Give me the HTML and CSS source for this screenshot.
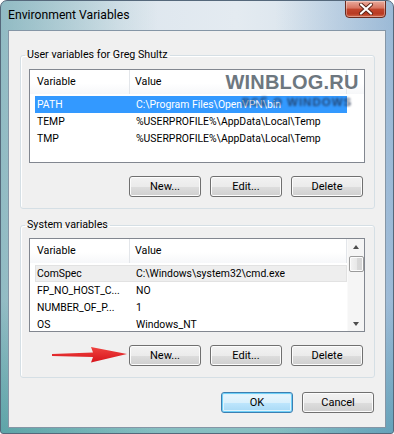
FILE: index.html
```html
<!DOCTYPE html>
<html>
<head>
<meta charset="utf-8">
<link rel="stylesheet" href="styles.css">
</head>
<body>
<div class="window">
  <div class="titlebar">
    <span class="title">Environment Variables</span>
    <div class="close">
      <svg width="16" height="12" viewBox="0 0 16 12">
        <path d="M3 1.5 L13 10.5 M13 1.5 L3 10.5" stroke="#5a2418" stroke-width="4" stroke-linecap="round"/>
        <path d="M3 1.5 L13 10.5 M13 1.5 L3 10.5" stroke="#ffffff" stroke-width="2.2" stroke-linecap="round"/>
      </svg>
    </div>
  </div>
  <div class="client">
    <fieldset class="group">
      <legend>User variables for Greg Shultz</legend>
      <div class="list first-list">
        <div class="list-main">
          <div class="header">
            <div class="hcol h1">Variable</div>
            <div class="hcol h2">Value</div>
            <div class="hcol hfill"></div>
          </div>
          <div class="rows">
            <div class="row sel"><span class="c1">PATH</span><span class="c2">C:\Program Files\OpenVPN\bin</span></div>
            <div class="row"><span class="c1">TEMP</span><span class="c2">%USERPROFILE%\AppData\Local\Temp</span></div>
            <div class="row"><span class="c1">TMP</span><span class="c2">%USERPROFILE%\AppData\Local\Temp</span></div>
          </div>
        </div>
      </div>
      <div class="buttons">
        <button class="btn">New...</button>
        <button class="btn">Edit...</button>
        <button class="btn">Delete</button>
      </div>
    </fieldset>
    <fieldset class="group group2">
      <legend>System variables</legend>
      <div class="list second-list">
        <div class="list-main">
          <div class="header">
            <div class="hcol h1">Variable</div>
            <div class="hcol h2">Value</div>
          </div>
          <div class="rows">
            <div class="row inactive"><span class="c1">ComSpec</span><span class="c2">C:\Windows\system32\cmd.exe</span></div>
            <div class="row"><span class="c1">FP_NO_HOST_C...</span><span class="c2">NO</span></div>
            <div class="row"><span class="c1">NUMBER_OF_P...</span><span class="c2">1</span></div>
            <div class="row"><span class="c1">OS</span><span class="c2">Windows_NT</span></div>
          </div>
        </div>
        <div class="vscroll">
          <div class="arrow-up"></div>
          <div class="thumb"></div>
          <div class="track"></div>
          <div class="arrow-down"></div>
        </div>
      </div>
      <div class="buttons">
        <button class="btn">New...</button>
        <button class="btn">Edit...</button>
        <button class="btn">Delete</button>
      </div>
    </fieldset>
    <div class="dialog-buttons">
      <button class="btn default">OK</button>
      <button class="btn">Cancel</button>
    </div>
  </div>
  <div class="watermark">
    <div class="wm1">WINBLOG.RU</div>
    <div class="wm2">ВСЁ О WINDOWS</div>
  </div>
  <svg class="red-arrow" width="80" height="18" viewBox="0 0 80 18">
    <defs>
      <linearGradient id="rg" x1="0" y1="0" x2="0" y2="1">
        <stop offset="0" stop-color="#f0433f"/>
        <stop offset="1" stop-color="#d6141c"/>
      </linearGradient>
    </defs>
    <path d="M1 8 L42 6.5 L40 1 L76 8 L40 16.5 L42 11 L1 10 Z" fill="url(#rg)"/>
  </svg>
</div>
</body>
</html>
```
FILE: styles.css
```css
* { box-sizing: border-box; }

body {
  margin: 0;
  font-family: Roboto, "Noto Sans", sans-serif;
  font-size: 10.4px;
  color: #000;
  background: #ffffff;
}

.window {
  position: relative;
  width: 394px;
  height: 434px;
  display: flex;
  flex-direction: column;
  border: 1px solid #55687b;
  border-radius: 7px 7px 3px 3px;
  background:
    linear-gradient(90deg, rgba(40,130,130,0.35) 0, rgba(255,255,255,0) 40%, rgba(255,255,255,0) 70%, rgba(60,120,180,0.35) 100%),
    linear-gradient(180deg, rgba(255,255,255,0) 0, rgba(255,255,255,0) 300px, rgba(70,160,160,0.6) 432px),
    linear-gradient(90deg, #c9d9e6 0, #dde6ee 30%, #e4ebf1 60%, #cfdde9 100%);
  overflow: hidden;
}

.titlebar {
  height: 29px;
  display: flex;
  align-items: flex-start;
  padding-left: 7px;
  flex: none;
}

.title {
  line-height: 28px;
  font-size: 12.2px;
  color: #000;
}

.close {
  margin-left: auto;
  margin-right: 7px;
  width: 41px;
  height: 18px;
  margin-top: -1px;
  border: 1px solid #6a2a1e;
  border-radius: 0 0 4px 4px;
  background: linear-gradient(180deg, #e9ab9c 0, #d7735f 45%, #c2452c 50%, #b83a22 80%, #d36a4c 100%);
  display: flex;
  align-items: center;
  justify-content: center;
  box-shadow: inset 0 0 0 1px rgba(255,255,255,0.35);
}

.client {
  margin-left: 7px;
  width: 378px;
  height: 398px;
  border: 1px solid #8596a6;
  background: #f0f0f0;
  padding: 0 10px 0 11px;
  display: flex;
  flex-direction: column;
  flex: none;
}

.group {
  margin: 16px 0 0;
  padding: 0 9px 11px 8px;
  border: 1px solid #d5dfe5;
  border-radius: 3px;
  min-width: 0;
  box-shadow: inset 1px 1px 0 #fff;
}

.group2 {
  margin-top: 8px;
}

.group legend {
  margin-left: -4px;
  padding: 0 2px;
  line-height: 16px;
  height: 16px;
  font-size: 10.7px;
}

.list {
  margin-top: 6px;
  width: 336px;
  height: 94px;
  border: 1px solid #828790;
  background: #fff;
  display: flex;
  overflow: hidden;
}

.group2 .list {
  margin-top: 5px;
}

.list-main {
  flex: 1;
  min-width: 0;
}

.header {
  height: 24px;
  display: flex;
  background: linear-gradient(180deg, #ffffff 0, #ffffff 55%, #f6f7f9 100%);
}

.hcol {
  height: 24px;
  line-height: 24px;
  border-right: 1px solid #e3e6ea;
  white-space: nowrap;
  font-size: 10.7px;
}

.h1 {
  width: 100px;
  padding-left: 7px;
}

.h2 {
  width: 217px;
  padding-left: 5px;
}

.hfill {
  flex: 1;
  border-right: none;
}

.rows {
  padding-top: 2px;
}

.row {
  margin-left: 5px;
  width: 312px;
  height: 17px;
  line-height: 17px;
  display: flex;
  white-space: nowrap;
}

.row .c1 {
  width: 95px;
  padding-left: 2px;
  overflow: hidden;
}

.row .c2 {
  padding-left: 6px;
  overflow: hidden;
}

.row.sel {
  background: #3399ff;
  color: #fff;
}

.row.inactive {
  background: #eeeeee;
  box-shadow: inset 0 0 0 1px #e2e2e2;
}

.vscroll {
  width: 17px;
  flex: none;
  display: flex;
  flex-direction: column;
  align-items: center;
  background: #f5f5f5;
  border-left: 1px solid #fafafa;
}

.arrow-up, .arrow-down {
  height: 17px;
  width: 17px;
  position: relative;
  flex: none;
}

.arrow-up::after, .arrow-down::after {
  content: "";
  position: absolute;
  left: 5px;
  width: 0;
  height: 0;
  border-left: 3.5px solid transparent;
  border-right: 3.5px solid transparent;
}

.arrow-up::after {
  top: 6px;
  border-bottom: 4px solid #4d4d4d;
}

.arrow-down::after {
  top: 8px;
  border-top: 4px solid #4d4d4d;
}

.thumb {
  width: 15px;
  height: 16px;
  flex: none;
  border: 1px solid #9b9b9b;
  border-radius: 2px;
  background: linear-gradient(90deg, #f3f3f3 0, #e8e8e8 50%, #d9d9d9 51%, #d4d4d4 100%);
  box-shadow: inset 0 0 0 1px #fcfcfc;
}

.track {
  flex: 1;
}

.buttons {
  margin-top: 13px;
  display: flex;
  justify-content: flex-end;
  gap: 9px;
  padding-right: 2px;
}

.btn {
  width: 72px;
  height: 21px;
  padding: 0;
  font-family: Roboto, "Noto Sans", sans-serif;
  font-size: 11px;
  color: #000;
  border: 1px solid #707070;
  border-radius: 3px;
  background: linear-gradient(180deg, #f2f2f2 0, #ebebeb 50%, #dddddd 51%, #cfcfcf 100%);
  box-shadow: inset 0 0 0 1px #fcfcfc;
}

.btn.default {
  border-color: #3c7fb1;
  box-shadow: inset 0 0 0 1px #6fd0f8, inset 0 0 0 2px #dff2fb;
  background: linear-gradient(180deg, #eaf6fd 0, #d9f0fc 50%, #bee6fd 51%, #a7d9f5 100%);
}

.dialog-buttons {
  margin-top: 14px;
  display: flex;
  justify-content: flex-end;
  gap: 9px;
  padding-right: 1px;
}

.watermark {
  position: absolute;
  left: 224px;
  top: 69px;
  width: 134px;
  text-align: center;
  font-family: "Liberation Sans", Arial, sans-serif;
  font-weight: bold;
  pointer-events: none;
}

.wm1 {
  font-size: 20px;
  line-height: 24px;
  color: #6d777f;
  text-shadow: 0 0 2px #fff, 0 0 3px #fff;
  letter-spacing: 0.2px;
}

.wm2 {
  font-size: 11.5px;
  line-height: 14px;
  color: rgba(30, 45, 75, 0.8);
  letter-spacing: 1px;
  filter: blur(0.8px);
  padding-left: 10px;
  margin-top: 1px;
}

.red-arrow {
  position: absolute;
  left: 50px;
  top: 345px;
}
```
